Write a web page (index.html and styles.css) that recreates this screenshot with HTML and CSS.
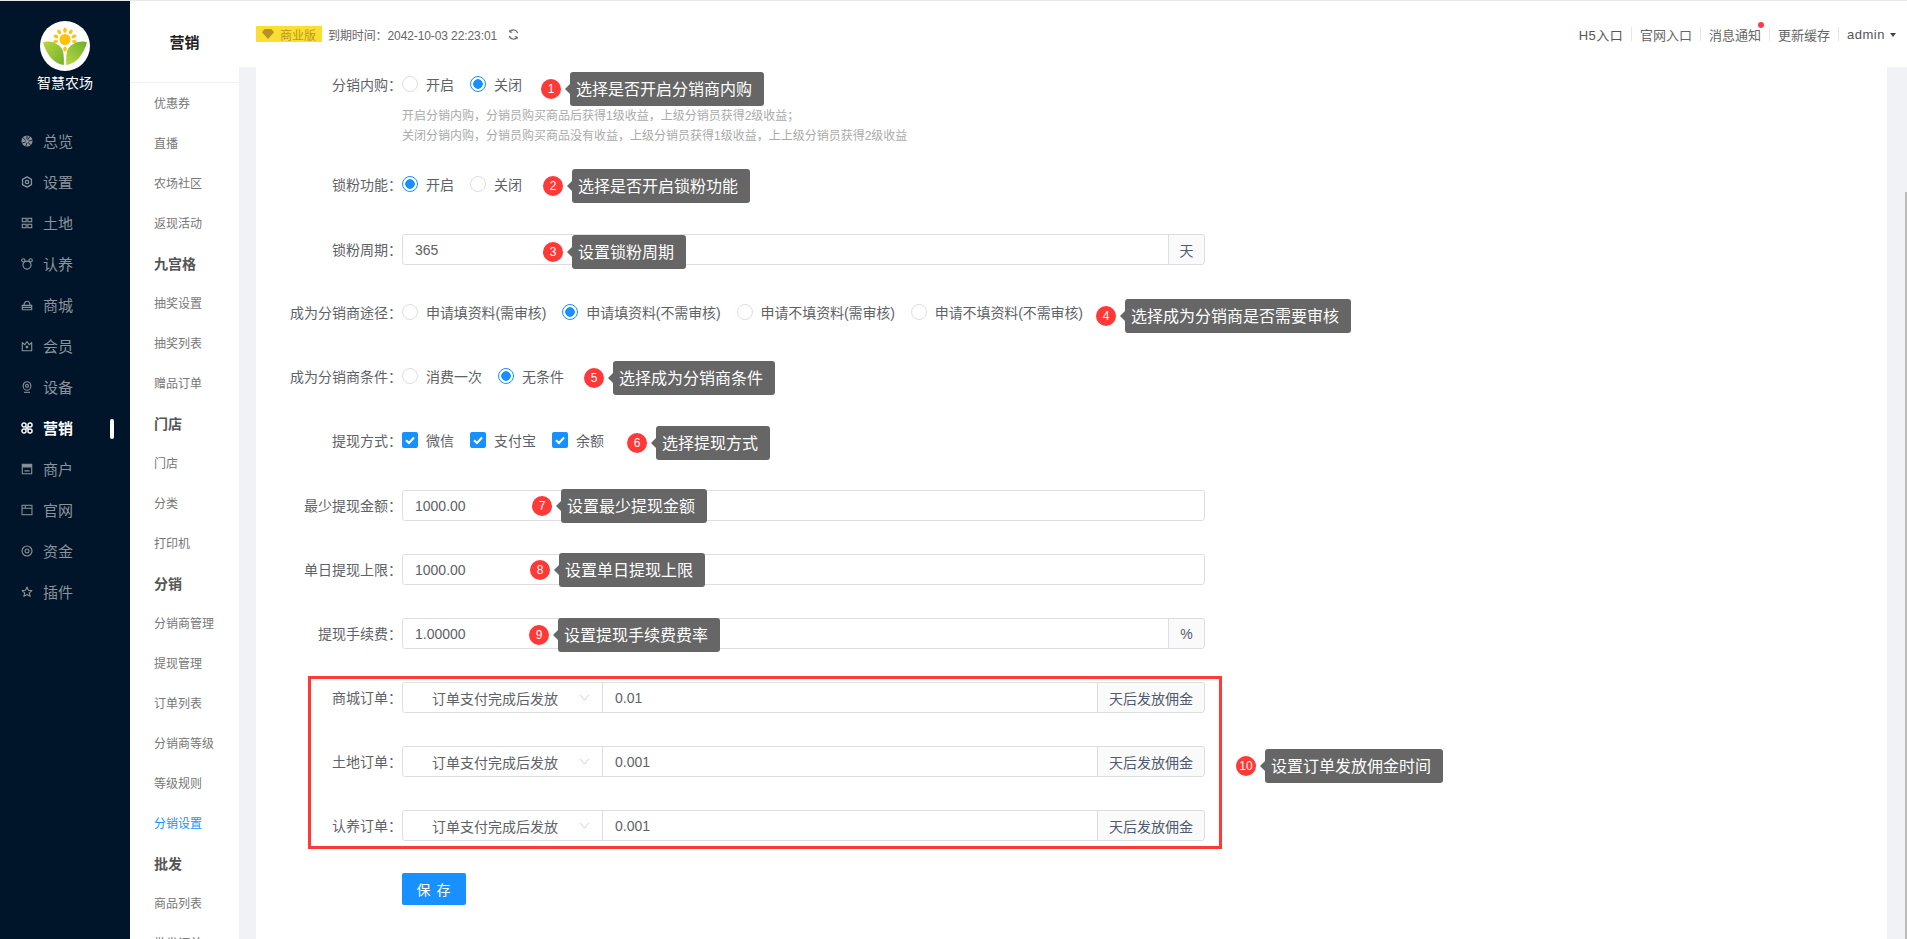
FILE: index.html
```html
<!DOCTYPE html>
<html lang="zh-CN">
<head>
<meta charset="utf-8">
<title>分销设置</title>
<link rel="stylesheet" href="styles.css">
</head>
<body>
<div class="app">
  <aside class="side">
    <div class="brand">
      <svg class="logo" viewBox="0 0 50 50" width="50" height="50">
        <defs>
          <linearGradient id="lf" x1="0" y1="0" x2="1" y2="1"><stop offset="0" stop-color="#b7d63f"/><stop offset="1" stop-color="#74b02e"/></linearGradient>
          <linearGradient id="rf" x1="1" y1="0" x2="0" y2="1"><stop offset="0" stop-color="#6fae2f"/><stop offset="1" stop-color="#b9d840"/></linearGradient>
        </defs>
        <circle cx="25" cy="25" r="25" fill="#fff"/>
        <g fill="#ffc20e">
          <circle cx="25" cy="18.5" r="5.6"/>
          <ellipse cx="25" cy="9.2" rx="1.7" ry="2.6"/>
          <ellipse cx="19.2" cy="10.8" rx="1.7" ry="2.5" transform="rotate(-32 19.2 10.8)"/>
          <ellipse cx="30.8" cy="10.8" rx="1.7" ry="2.5" transform="rotate(32 30.8 10.8)"/>
          <ellipse cx="16" cy="15.4" rx="1.7" ry="2.5" transform="rotate(-65 16 15.4)"/>
          <ellipse cx="34" cy="15.4" rx="1.7" ry="2.5" transform="rotate(65 34 15.4)"/>
          <ellipse cx="15.6" cy="20.6" rx="1.5" ry="2.4" transform="rotate(-100 15.6 20.6)"/>
          <ellipse cx="34.4" cy="20.6" rx="1.5" ry="2.4" transform="rotate(100 34.4 20.6)"/>
          <ellipse cx="25" cy="28" rx="1.8" ry="2.6"/>
        </g>
        <path d="M3 21C10 19 20 22 23 30C24 35 24 40 23.8 44C14 43 6 33 3 21Z" fill="url(#lf)"/>
        <path d="M47 21C40 19 30 22 27 30C26 35 26 40 26.2 44C36 43 44 33 47 21Z" fill="url(#rf)"/>
      </svg>
      <div class="brand-name">智慧农场</div>
    </div>
    <nav class="nav">
      <a class="nav-item">
        <svg class="ico" viewBox="0 0 14 14"><circle cx="7" cy="7" r="6.500" fill="currentColor"/><path d="M7 .5v4.500M2 3 5.500 6M1 9.500 5.500 8M5.500 13.500 7 9M11.500 12.500 8.500 8.500M13.500 6 9 7M10.500 1.500 8 5.500" stroke="#00142a" stroke-width="1"/></svg>
        <span>总览</span>
      </a>
      <a class="nav-item">
        <svg class="ico" viewBox="0 0 14 14" fill="none" stroke="currentColor"><path d="M7 1 12.200 4v6L7 13 1.800 10V4Z" stroke-width="1.500" stroke-linejoin="round"/><circle cx="7" cy="7" r="2" stroke-width="1.500"/></svg>
        <span>设置</span>
      </a>
      <a class="nav-item">
        <svg class="ico" viewBox="0 0 14 14" fill="none" stroke="currentColor" stroke-width="1.300"><rect x="1.500" y="1.500" width="4.500" height="4"/><rect x="8" y="1.500" width="4.500" height="4"/><rect x="1.500" y="8.500" width="4.500" height="4"/><rect x="8" y="8.500" width="4.500" height="4"/></svg>
        <span>土地</span>
      </a>
      <a class="nav-item">
        <svg class="ico" viewBox="0 0 14 14" fill="none" stroke="currentColor" stroke-width="1.300"><circle cx="7" cy="8.300" r="4.700"/><circle cx="2.700" cy="2.700" r="1.900"/><circle cx="11.300" cy="2.700" r="1.900"/></svg>
        <span>认养</span>
      </a>
      <a class="nav-item">
        <svg class="ico" viewBox="0 0 14 14" fill="none" stroke="currentColor" stroke-width="1.300"><path d="M1.500 7.500h11v5h-11zM3.500 7.500C3.500 1 10.500 1 10.500 7.500M1.500 9.800h11"/></svg>
        <span>商城</span>
      </a>
      <a class="nav-item">
        <svg class="ico" viewBox="0 0 14 14" fill="none" stroke="currentColor" stroke-width="1.300"><path d="M1.500 3 4.500 5.500 7 1.800 9.500 5.500 12.500 3V12.500H1.500Z" stroke-linejoin="round"/><circle cx="7" cy="8.300" r=".9" fill="currentColor"/></svg>
        <span>会员</span>
      </a>
      <a class="nav-item">
        <svg class="ico" viewBox="0 0 14 14" fill="none" stroke="currentColor" stroke-width="1.300"><ellipse cx="7" cy="5.800" rx="4.500" ry="5"/><circle cx="7" cy="5.500" r="1.700"/><path d="M3.500 13.200h7"/></svg>
        <span>设备</span>
      </a>
      <a class="nav-item active">
        <svg class="ico" viewBox="0 0 14 14" fill="none" stroke="currentColor" stroke-width="1.700"><circle cx="3.500" cy="3.500" r="2.400"/><circle cx="10.500" cy="3.500" r="2.400"/><circle cx="3.500" cy="10.500" r="2.400"/><circle cx="10.500" cy="10.500" r="2.400"/><path d="M5 7h4M7 5v4"/></svg>
        <span>营销</span>
      </a>
      <a class="nav-item">
        <svg class="ico" viewBox="0 0 14 14" fill="none" stroke="currentColor" stroke-width="1.300"><path d="M1.500 1.500h11v3h-11z" fill="currentColor"/><path d="M1.500 5v7.500h11V5M4 9.200h6"/></svg>
        <span>商户</span>
      </a>
      <a class="nav-item">
        <svg class="ico" viewBox="0 0 14 14" fill="none" stroke="currentColor" stroke-width="1.200"><rect x="1.200" y="1.500" width="11.600" height="11"/><path d="M1.200 5h11.600M5 1.500V5"/></svg>
        <span>官网</span>
      </a>
      <a class="nav-item">
        <svg class="ico" viewBox="0 0 14 14" fill="none" stroke="currentColor" stroke-width="1.300"><circle cx="7" cy="7" r="5.800"/><circle cx="7" cy="7" r="2.300"/></svg>
        <span>资金</span>
      </a>
      <a class="nav-item">
        <svg class="ico" viewBox="0 0 14 14" fill="none" stroke="currentColor" stroke-width="1.300"><path d="M7 1.300 8.700 5l4 .4-3 2.700.9 4L7 10l-3.600 2.100.9-4-3-2.700 4-.4Z" stroke-linejoin="round"/></svg>
        <span>插件</span>
      </a>
    </nav>
    <i class="nav-bar"></i>
  </aside>

  <aside class="sub">
    <div class="sub-title">营销</div>
    <ul class="sub-list">
      <li>优惠券</li>
      <li>直播</li>
      <li>农场社区</li>
      <li>返现活动</li>
      <li class="group-title">九宫格</li>
      <li>抽奖设置</li>
      <li>抽奖列表</li>
      <li>赠品订单</li>
      <li class="group-title">门店</li>
      <li>门店</li>
      <li>分类</li>
      <li>打印机</li>
      <li class="group-title">分销</li>
      <li>分销商管理</li>
      <li>提现管理</li>
      <li>订单列表</li>
      <li>分销商等级</li>
      <li>等级规则</li>
      <li class="current">分销设置</li>
      <li class="group-title">批发</li>
      <li>商品列表</li>
      <li>批发订单</li>
    </ul>
  </aside>

  <div class="main">
    <header class="top">
      <div class="top-left">
        <span class="edition">
          <svg class="gem" viewBox="0 0 12 10" width="12" height="10"><path d="M2.500 0h7L12 3.200 6 10 0 3.200Z" fill="currentColor"/></svg>
          商业版
        </span>
        <span class="expire">到期时间：2042-10-03 22:23:01</span>
        <svg class="refresh" viewBox="0 0 12 12" width="11" height="11" fill="none" stroke="#666" stroke-width="1.300"><path d="M10.500 4.500A4.700 4.700 0 0 0 2 3.200M1.500 7.500A4.700 4.700 0 0 0 10 8.800"/><path d="M2 .8v2.700h2.700M10 11.200V8.500H7.300" stroke-width="1"/></svg>
      </div>
      <div class="top-right">
        <a class="dark h5">H5入口</a><i class="sep"></i>
        <a>官网入口</a><i class="sep"></i>
        <a class="msg">消息通知<i class="dot"></i></a><i class="sep"></i>
        <a>更新缓存</a><i class="sep"></i>
        <a class="dark user">admin<i class="caret"></i></a>
      </div>
    </header>

    <div class="content">
      <form class="panel">
        <div class="field field-help">
          <div class="row choice">
            <label class="lab">分销内购：</label>
            <span class="opts">
              <span class="opt"><i class="radio"></i>开启</span>
              <span class="opt"><i class="radio on"></i>关闭</span>
            </span>
            <div class="note n1"><b>1</b><span>选择是否开启分销商内购</span></div>
          </div>
          <p class="help">开启分销内购，分销员购买商品后获得1级收益，上级分销员获得2级收益；<br>关闭分销内购，分销员购买商品没有收益，上级分销员获得1级收益，上上级分销员获得2级收益</p>
        </div>

        <div class="field row choice">
          <label class="lab">锁粉功能：</label>
          <span class="opts">
            <span class="opt"><i class="radio on"></i>开启</span>
            <span class="opt"><i class="radio"></i>关闭</span>
          </span>
          <div class="note n2"><b>2</b><span>选择是否开启锁粉功能</span></div>
        </div>

        <div class="field row">
          <label class="lab">锁粉周期：</label>
          <div class="group">
            <input class="ipt" value="365">
            <span class="addon unit">天</span>
          </div>
          <div class="note n3"><b>3</b><span>设置锁粉周期</span></div>
        </div>

        <div class="field row choice">
          <label class="lab">成为分销商途径：</label>
          <span class="opts opts-long">
            <span class="opt"><i class="radio"></i>申请填资料(需审核)</span>
            <span class="opt"><i class="radio on"></i>申请填资料(不需审核)</span>
            <span class="opt"><i class="radio"></i>申请不填资料(需审核)</span>
            <span class="opt"><i class="radio"></i>申请不填资料(不需审核)</span>
          </span>
          <div class="note n4"><b>4</b><span>选择成为分销商是否需要审核</span></div>
        </div>

        <div class="field row choice">
          <label class="lab">成为分销商条件：</label>
          <span class="opts">
            <span class="opt"><i class="radio"></i>消费一次</span>
            <span class="opt"><i class="radio on"></i>无条件</span>
          </span>
          <div class="note n5"><b>5</b><span>选择成为分销商条件</span></div>
        </div>

        <div class="field row choice">
          <label class="lab">提现方式：</label>
          <span class="opts">
            <span class="opt"><i class="check"><svg viewBox="0 0 16 16" width="16" height="16" fill="none" stroke="#fff" stroke-width="2"><path d="M4 8.200 7 11l5-5.500"/></svg></i>微信</span>
            <span class="opt"><i class="check"><svg viewBox="0 0 16 16" width="16" height="16" fill="none" stroke="#fff" stroke-width="2"><path d="M4 8.200 7 11l5-5.500"/></svg></i>支付宝</span>
            <span class="opt"><i class="check"><svg viewBox="0 0 16 16" width="16" height="16" fill="none" stroke="#fff" stroke-width="2"><path d="M4 8.200 7 11l5-5.500"/></svg></i>余额</span>
          </span>
          <div class="note n6"><b>6</b><span>选择提现方式</span></div>
        </div>

        <div class="field row">
          <label class="lab">最少提现金额：</label>
          <div class="group"><input class="ipt" value="1000.00"></div>
          <div class="note n7"><b>7</b><span>设置最少提现金额</span></div>
        </div>

        <div class="field row">
          <label class="lab">单日提现上限：</label>
          <div class="group"><input class="ipt" value="1000.00"></div>
          <div class="note n8"><b>8</b><span>设置单日提现上限</span></div>
        </div>

        <div class="field row">
          <label class="lab">提现手续费：</label>
          <div class="group">
            <input class="ipt" value="1.00000">
            <span class="addon unit">%</span>
          </div>
          <div class="note n9"><b>9</b><span>设置提现手续费费率</span></div>
        </div>

        <div class="orders">
          <div class="field row">
            <label class="lab lab-in">商城订单：</label>
            <div class="group">
              <span class="select">订单支付完成后发放<svg class="chev" viewBox="0 0 12 8" width="11" height="7" fill="none" stroke="#c5c8ce"><path d="M1 1 6 7l5-6"/></svg></span>
              <input class="ipt" value="0.01">
              <span class="addon days">天后发放佣金</span>
            </div>
          </div>
          <div class="field row">
            <label class="lab lab-in">土地订单：</label>
            <div class="group">
              <span class="select">订单支付完成后发放<svg class="chev" viewBox="0 0 12 8" width="11" height="7" fill="none" stroke="#c5c8ce"><path d="M1 1 6 7l5-6"/></svg></span>
              <input class="ipt" value="0.001">
              <span class="addon days">天后发放佣金</span>
            </div>
          </div>
          <div class="field row last">
            <label class="lab lab-in">认养订单：</label>
            <div class="group">
              <span class="select">订单支付完成后发放<svg class="chev" viewBox="0 0 12 8" width="11" height="7" fill="none" stroke="#c5c8ce"><path d="M1 1 6 7l5-6"/></svg></span>
              <input class="ipt" value="0.001">
              <span class="addon days">天后发放佣金</span>
            </div>
          </div>
          <div class="note n10"><b>10</b><span>设置订单发放佣金时间</span></div>
        </div>

        <div class="actions"><button class="save" type="button">保 存</button></div>
      </form>
    </div>
    <i class="thumb"></i>
  </div>
</div>
</body>
</html>
```

FILE: styles.css
```css
* { box-sizing: border-box; }
html, body { margin: 0; height: 100%; overflow: hidden; }
body {
  font-family: "Liberation Sans", "Noto Sans CJK SC", sans-serif;
  font-size: 14px;
  color: #606266;
  background: #fff;
}
.app {
  display: flex;
  height: 939px;
  border-top: 1px solid #e8e8e8;
}

/* primary sidebar */
.side {
  position: relative;
  width: 130px;
  flex: none;
  background: #00142a;
}
.brand {
  height: 119px;
  padding-top: 20px;
  display: flex;
  flex-direction: column;
  align-items: center;
}
.logo { display: block; }
.brand-name {
  margin-top: 2px;
  font-size: 14px;
  line-height: 20px;
  color: #fff;
}
.nav-item {
  display: flex;
  align-items: center;
  height: 41px;
  padding-left: 21px;
  font-size: 15px;
  color: #8c939c;
}
.ico { width: 12px; height: 12px; margin-right: 10px; flex: none; }
.nav-item.active { color: #fff; font-weight: 700; }
.nav-bar {
  position: absolute;
  left: 110px;
  top: 418px;
  width: 4px;
  height: 20px;
  border-radius: 2px;
  background: #fff;
}

/* secondary menu */
.sub {
  width: 109px;
  flex: none;
  background: #fff;
  overflow: hidden;
}
.sub-title {
  height: 82px;
  display: flex;
  align-items: center;
  justify-content: center;
  font-size: 15px;
  font-weight: 700;
  color: #222;
  border-bottom: 1px solid #f2f2f2;
  padding-top: 3px;
  padding-bottom: 3px;
}
.sub-list {
  list-style: none;
  margin: 1px 0 0;
  padding: 0 0 0 24px;
  font-size: 12px;
  color: #777;
}
.sub-list li {
  height: 40px;
  line-height: 40px;
  white-space: nowrap;
}
.sub-list .group-title { font-size: 14px; font-weight: 700; color: #555; }
.sub-list .current { color: #1890ff; }

/* main column */
.main {
  position: relative;
  flex: 1;
  min-width: 0;
  display: flex;
  flex-direction: column;
}
.top {
  height: 66px;
  flex: none;
  display: flex;
  align-items: center;
  justify-content: space-between;
  padding: 0 11px 0 17px;
  background: #fff;
}
.top-left { display: flex; align-items: center; font-size: 12px; color: #666; }
.edition {
  display: flex;
  align-items: center;
  width: 66px;
  height: 16px;
  padding-left: 6px;
  background: #fadf30;
  color: #bd962a;
}
.gem { margin-right: 6px; color: #b8902a; }
.expire { margin-left: 6px; letter-spacing: -0.1px; }
.refresh { margin-left: 11px; }
.top-right { display: flex; align-items: center; font-size: 13px; color: #666; }
.top-right .dark { color: #555; }
.h5 { letter-spacing: .4px; }
.user { letter-spacing: .5px; }
.sep {
  width: 1px;
  height: 14px;
  margin: 0 8px;
  background: #e6e6e6;
}
.msg { position: relative; }
.dot {
  position: absolute;
  right: -3px;
  top: -3px;
  width: 6px;
  height: 6px;
  border-radius: 50%;
  background: #ff3b47;
}
.caret {
  display: inline-block;
  margin-left: 5px;
  vertical-align: middle;
  border-top: 4px solid #444;
  border-left: 3px solid transparent;
  border-right: 3px solid transparent;
}
.content {
  flex: 1;
  min-height: 0;
  padding: 0 20px 0 17px;
  background: #f0f2f5;
}
.panel {
  height: 100%;
  padding-top: 2px;
  background: #fff;
  overflow: hidden;
}
.thumb {
  position: absolute;
  right: 0;
  top: 191px;
  bottom: 0;
  width: 2px;
  background: #bbb;
}

/* form */
.field { margin-bottom: 32px; }
.field-help { margin-bottom: 23px; }
.row {
  position: relative;
  display: flex;
  align-items: center;
  height: 32px;
}
.choice { padding-bottom: 2px; }
.lab {
  width: 146px;
  flex: none;
  text-align: right;
  white-space: nowrap;
  color: #606266;
}
.lab-in { width: 91px; }
.help {
  margin: 5px 0 0 146px;
  font-size: 12px;
  line-height: 20px;
  color: #aaa;
}
.opts { display: flex; gap: 16px; color: #606266; }
.opts-long { letter-spacing: -0.1px; }
.opt { display: flex; align-items: center; gap: 8px; white-space: nowrap; }
.radio {
  width: 16px;
  height: 16px;
  border: 1px solid #dcdee2;
  border-radius: 50%;
  background: #fff;
  flex: none;
}
.radio.on {
  border-color: #1890ff;
  background: radial-gradient(circle, #1890ff 0 4.500px, #fff 5px);
}
.check {
  width: 16px;
  height: 16px;
  border-radius: 2px;
  background: #1890ff;
  flex: none;
}
.check svg { display: block; }
.group {
  display: flex;
  width: 803px;
  height: 31px;
  margin-top: 1px;
}
.ipt {
  flex: 1;
  min-width: 0;
  height: 100%;
  padding: 0 12px;
  border: 1px solid #dcdee2;
  border-radius: 3px;
  font: inherit;
  color: #606266;
  background: #fff;
  outline: 0;
}
.addon {
  flex: none;
  display: flex;
  align-items: center;
  justify-content: center;
  margin-left: -1px;
  border: 1px solid #dcdee2;
  border-radius: 0 3px 3px 0;
  background: #fafafa;
  color: #515a6e;
}
.unit { width: 37px; }
.days { width: 108px; }
.group .ipt:not(:last-child) { border-radius: 3px 0 0 3px; }
.select {
  flex: none;
  width: 201px;
  display: flex;
  align-items: center;
  justify-content: space-between;
  padding: 0 12px 0 29px;
  border: 1px solid #dcdee2;
  border-radius: 3px 0 0 3px;
  color: #606266;
  white-space: nowrap;
}
.group .select + .ipt { border-radius: 0; margin-left: -1px; }
.orders {
  position: relative;
  width: 914px;
  margin: -5px 0 0 52px;
  padding: 2px 0 5px;
  border: 3px solid #ff3838;
}
.orders .last { margin-bottom: 0; }
.actions { margin: 24px 0 0 146px; }
.save {
  display: block;
  width: 64px;
  height: 32px;
  padding: 0;
  border: 0;
  border-radius: 2px;
  background: #1890ff;
  color: #fff;
  font: inherit;
  letter-spacing: 1px;
}

/* annotations laid over the form */
.note {
  position: absolute;
  display: flex;
  align-items: center;
  gap: 9px;
  height: 34px;
}
.note b {
  width: 20px;
  height: 20px;
  border-radius: 50%;
  background: #ff3838;
  color: #fff;
  font-size: 12px;
  font-weight: 400;
  line-height: 20px;
  text-align: center;
  flex: none;
}
.note span {
  position: relative;
  height: 34px;
  padding: 0 12px 0 6px;
  border-radius: 3px;
  background: #666;
  color: #fff;
  font-size: 16px;
  line-height: 36px;
  white-space: nowrap;
}
.note span::before {
  content: "";
  position: absolute;
  left: -5px;
  top: 12px;
  border-top: 5px solid transparent;
  border-bottom: 5px solid transparent;
  border-right: 5px solid #666;
}
.n1 { left: 285px; top: 3px; }
.n2 { left: 287px; top: 0; }
.n3 { left: 287px; top: 2px; }
.n4 { left: 840px; top: 2px; }
.n5 { left: 328px; top: 0; }
.n6 { left: 371px; top: 1px; }
.n7 { left: 276px; top: 0; }
.n8 { left: 274px; top: 0; }
.n9 { left: 273px; top: 1px; }
.n10 { left: 925px; top: 70px; }
```
